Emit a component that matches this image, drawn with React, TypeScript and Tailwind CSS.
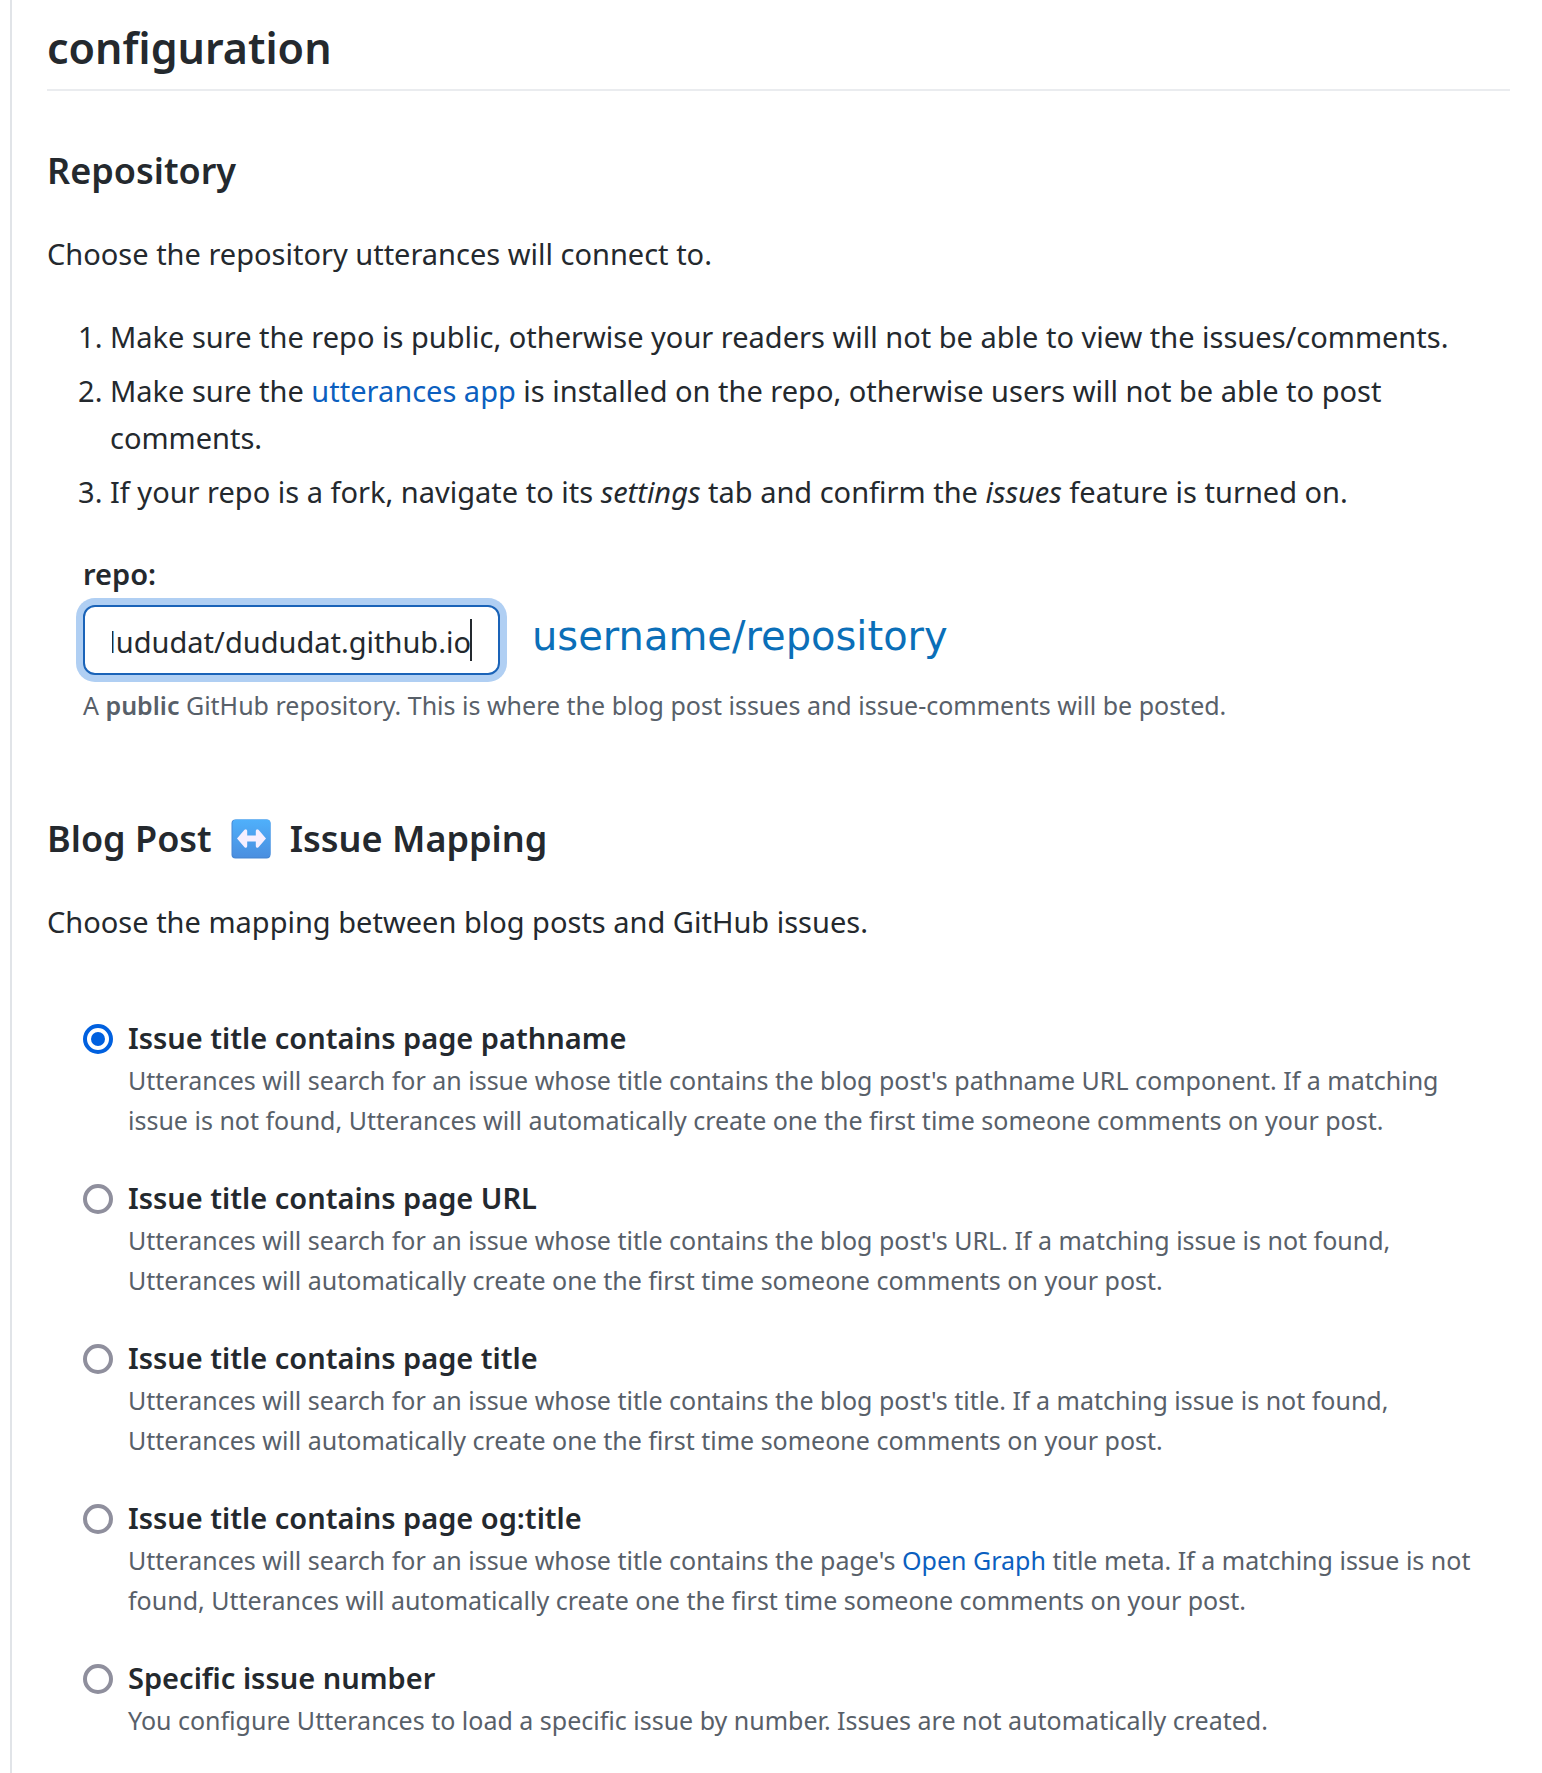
import { useLayoutEffect, useRef, useState, type ReactNode } from "react";

type Option = { id: string; title: string; body: ReactNode };

const options: Option[] = [
  {
    id: "pathname",
    title: "Issue title contains page pathname",
    body: "Utterances will search for an issue whose title contains the blog post's pathname URL component. If a matching issue is not found, Utterances will automatically create one the first time someone comments on your post.",
  },
  {
    id: "url",
    title: "Issue title contains page URL",
    body: "Utterances will search for an issue whose title contains the blog post's URL. If a matching issue is not found, Utterances will automatically create one the first time someone comments on your post.",
  },
  {
    id: "title",
    title: "Issue title contains page title",
    body: "Utterances will search for an issue whose title contains the blog post's title. If a matching issue is not found, Utterances will automatically create one the first time someone comments on your post.",
  },
  {
    id: "og",
    title: "Issue title contains page og:title",
    body: (
      <>
        Utterances will search for an issue whose title contains the page's{" "}
        <a href="#open-graph" className="text-[#0b5fbf]">
          Open Graph
        </a>{" "}
        title meta. If a matching issue is not found, Utterances will automatically create one the first time someone
        comments on your post.
      </>
    ),
  },
  {
    id: "number",
    title: "Specific issue number",
    body: "You configure Utterances to load a specific issue by number. Issues are not automatically created.",
  },
];

function LeftRightIcon() {
  return (
    <svg viewBox="0 0 40 40" className="size-10" role="img" aria-label="left-right arrow">
      <defs>
        <linearGradient id="tile" x1="0" y1="0" x2="0" y2="1">
          <stop offset="0" stopColor="#4fb0fb" />
          <stop offset="1" stopColor="#4a8fe0" />
        </linearGradient>
      </defs>
      <rect x="0.5" y="0.5" width="39" height="39" rx="4" fill="#4788d6" />
      <rect x="1.5" y="0.5" width="38" height="37.5" rx="4" fill="url(#tile)" />
      <path
        d="M6 19.500 13.500 10.800q2.200-1.400 2.700 1v4.700h8.600v-4.700q.5-2.400 2.700-1L35 19.500 27.500 28.200q-2.200 1.400-2.700-1v-4.700h-8.600v4.700q-.5 2.400-2.700 1z"
        fill="#f6efff"
      />
    </svg>
  );
}

function RepoInput() {
  const ref = useRef<HTMLInputElement>(null);
  const [value, setValue] = useState("dududat/dududat.github.io");

  // Keep the end of a long name in view.
  useLayoutEffect(() => {
    const el = ref.current;
    if (el) el.scrollLeft = el.scrollWidth;
  }, [value]);

  return (
    <div className="relative">
      <input
        id="repo"
        ref={ref}
        type="text"
        value={value}
        onChange={(e) => setValue(e.target.value)}
        className="block h-[70px] w-[417px] rounded-xl border-2 border-[#1a63b8] bg-white px-[27px] pt-0.5 text-[29px] text-[#24292e] caret-transparent ring-7 ring-[#b0cff3] outline-none"
      />
      <span className="absolute top-[14px] right-[28px] h-[42px] w-[2px] bg-[#24292e]" />
    </div>
  );
}

export default function App() {
  const [selected, setSelected] = useState("pathname");

  return (
    <div className="bg-white pl-[10px] font-['Noto_Sans','Open_Sans',sans-serif] text-[29px] leading-[47px] text-[#24292e]">
      <main className="min-h-screen border-l-2 border-[#e1e4e8] pr-8 pb-6 pl-[35px]">
        <h1 className="border-b-2 border-[#eaecef] pt-[18px] pb-[11px] text-[43px] leading-[60px] font-semibold">
          configuration
        </h1>

        <h2 className="pt-14 text-[36px] leading-[48px] font-semibold">Repository</h2>
        <p className="pt-[35px]">Choose the repository utterances will connect to.</p>
        <ol className="list-decimal space-y-[7px] pt-9 pl-[63px]">
          <li>Make sure the repo is public, otherwise your readers will not be able to view the issues/comments.</li>
          <li>
            Make sure the{" "}
            <a href="#utterances-app" className="text-[#0b5fbf]">
              utterances app
            </a>{" "}
            is installed on the repo, otherwise users will not be able to post comments.
          </li>
          <li>
            If your repo is a fork, navigate to its <em>settings</em> tab and confirm the <em>issues</em> feature is turned
            on.
          </li>
        </ol>

        <div className="pt-[35px] pl-9">
          <label htmlFor="repo" className="block font-semibold">
            repo:
          </label>
          <div className="flex items-center gap-8 pt-2">
            <RepoInput />
            <span className="pb-2 font-['DejaVu_Sans',sans-serif] text-[40px] text-[#0b6fb8]">username/repository</span>
          </div>
          <p className="pt-2.5 text-[25px] leading-[40px] text-[#586069]">
            A <strong className="font-semibold">public</strong> GitHub repository. This is where the blog post issues and
            issue-comments will be posted.
          </p>
        </div>

        <h2 className="flex items-center gap-[19px] pt-[90px] text-[36px] leading-[48px] font-semibold">
          Blog Post
          <LeftRightIcon />
          Issue Mapping
        </h2>
        <p className="pt-[35px]">Choose the mapping between blog posts and GitHub issues.</p>

        <fieldset className="space-y-[34px] pt-[70px] pr-8 pl-9">
          {options.map((o) => (
            <div key={o.id} className="flex gap-[15px]">
              <input
                type="radio"
                name="mapping"
                id={o.id}
                checked={selected === o.id}
                onChange={() => setSelected(o.id)}
                className="mt-[9px] size-[30px] shrink-0 appearance-none rounded-full border-4 border-[#8f8f9d] bg-white checked:border-[#0060df] checked:bg-[#0060df] checked:bg-clip-content checked:p-1"
              />
              <div>
                <label htmlFor={o.id} className="block leading-[45px] font-semibold">
                  {o.title}
                </label>
                <p className="pb-px text-[25px] leading-[40px] text-[#586069]">{o.body}</p>
              </div>
            </div>
          ))}
        </fieldset>
      </main>
    </div>
  );
}
